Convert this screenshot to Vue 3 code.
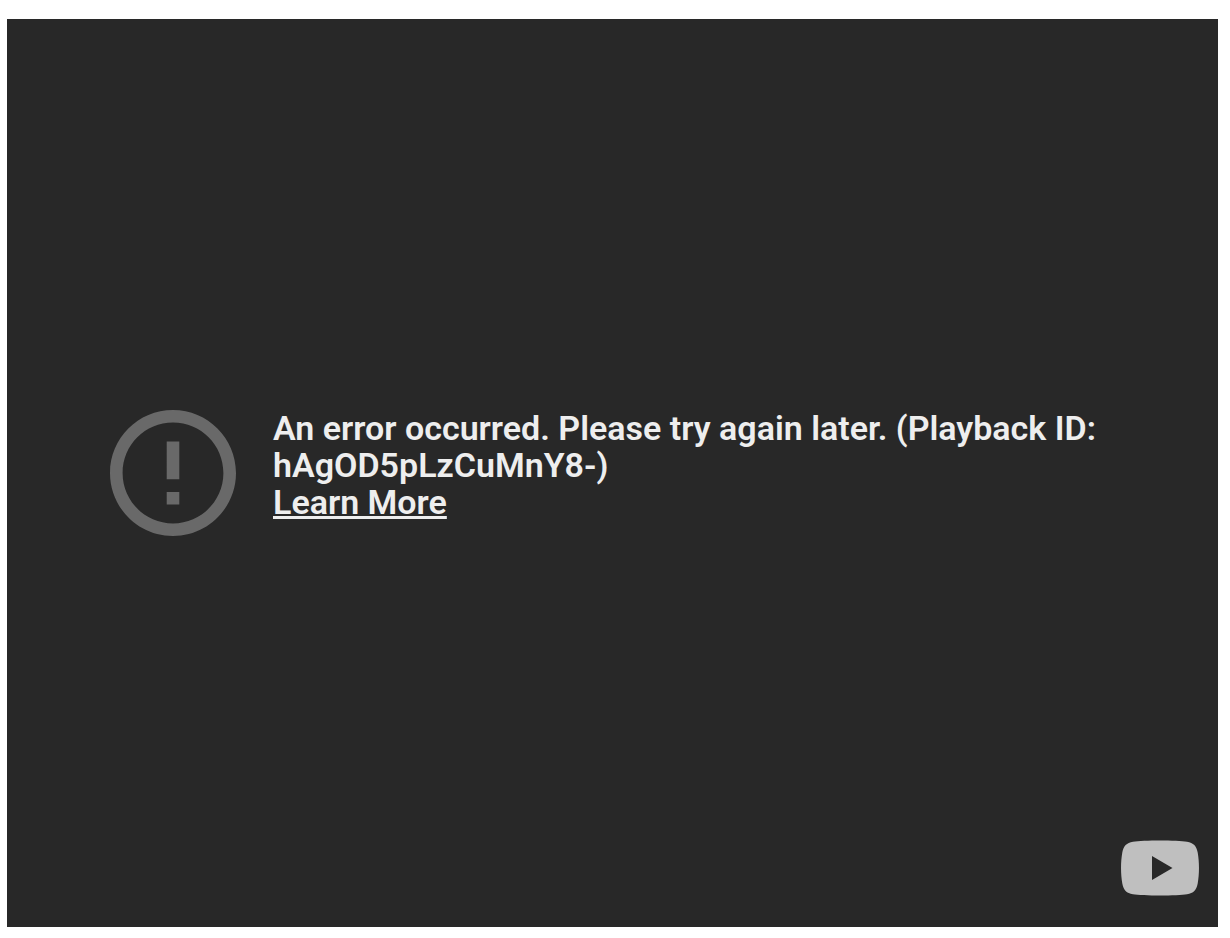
<script setup>
const message = 'An error occurred. Please try again later. (Playback ID: hAgOD5pLzCuMnY8-)'
</script>

<template>
  <main class="page">
    <section class="player">
      <div class="error" role="alert">
        <svg class="error-icon" viewBox="2 2 20 20" aria-hidden="true">
          <path d="M11 15h2v2h-2zm0-8h2v6h-2zm.99-5C6.47 2 2 6.48 2 12s4.47 10 9.99 10C17.52 22 22 17.52 22 12S17.52 2 11.99 2zM12 20c-4.42 0-8-3.58-8-8s3.58-8 8-8 8 3.58 8 8-3.58 8-8 8z" />
        </svg>
        <div class="error-text">
          <p class="message">{{ message }}</p>
          <a class="learn-more" href="#">Learn More</a>
        </div>
      </div>
      <a class="watermark" href="#" aria-label="Watch on YouTube">
        <svg class="logo" viewBox="0 0 78 56" aria-hidden="true">
          <path fill-rule="evenodd" d="M39 .4C50 .4 61 .9 66 1.700C72.500 2.700 75.500 6 76.700 12.500C78.400 22 78.400 34 76.700 43.500C75.500 50 72.500 53.300 66 54.300C57 56 21 56 12 54.300C5.500 53.300 2.500 50 1.300 43.500C-.4 34-.4 22 1.300 12.500C2.500 6 5.500 2.700 12 1.700C17 .9 28 .4 39 .4ZM31 16V40L51.500 28Z" />
        </svg>
      </a>
    </section>
  </main>
</template>

<style>
body {
  margin: 0;
  background: #fff;
}
</style>

<style scoped>
.page {
  display: flex;
  box-sizing: border-box;
  min-height: 100vh;
  padding: 19px 12px 11px 7px;
}
.player {
  flex: 1;
  display: grid;
  grid-template-rows: 1fr auto 1fr;
  box-sizing: border-box;
  padding: 0 19px 31px 103px;
  background: #282828;
  color: #eee;
  font-family: Roboto, Arial, sans-serif;
}
.error {
  grid-row: 2;
  display: flex;
  align-items: flex-start;
  gap: 37px;
  padding: 31px 95px 0 0;
}
.error-icon {
  flex: none;
  width: 126px;
  height: 126px;
  fill: #696969;
}
.error-text {
  font-size: 34px;
  font-weight: 600;
  line-height: 37px;
}
.message {
  margin: 0;
}
.learn-more {
  color: inherit;
}
.watermark {
  grid-row: 3;
  align-self: end;
  justify-self: end;
  display: block;
}
.logo {
  display: block;
  width: 78px;
  height: 56px;
  fill: #bfbfbf;
}
</style>
